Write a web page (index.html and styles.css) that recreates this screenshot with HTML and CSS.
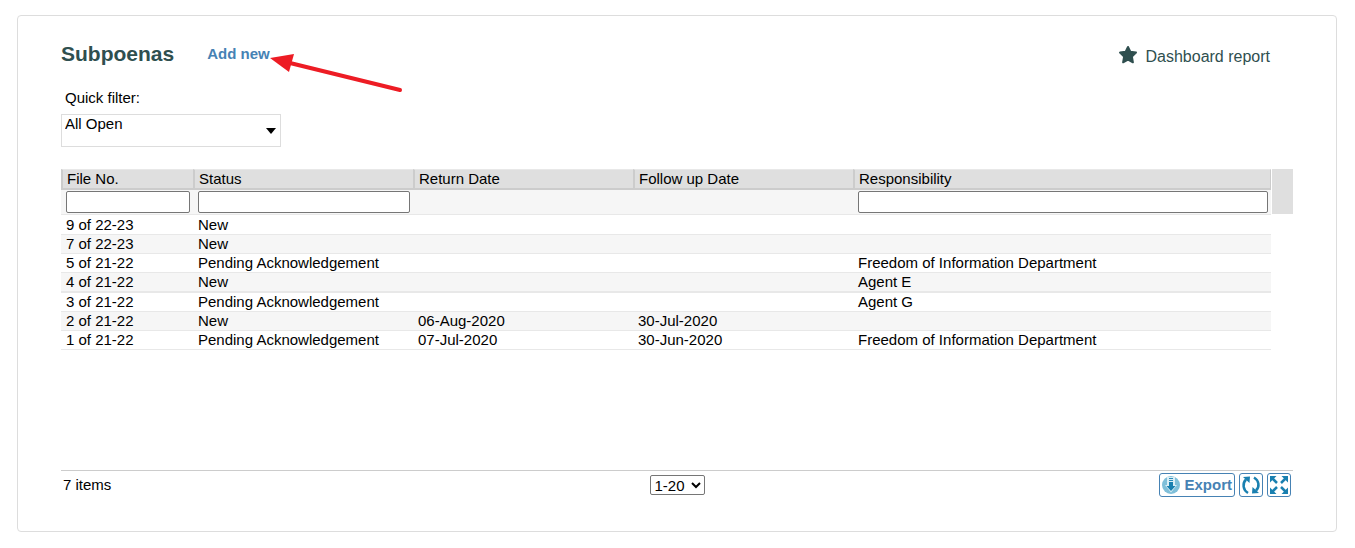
FILE: index.html
```html
<!DOCTYPE html>
<html lang="en">
<head>
    <meta charset="UTF-8">
    <meta name="viewport" content="width=device-width, initial-scale=1.0">
    <title>Subpoenas</title>
    <link rel="stylesheet" href="styles.css">
</head>
<body>
    <main class="card">
        <header class="card-header">
            <h1>Subpoenas</h1>
            <div class="add-new">
                <a href="#">Add new</a>
                <svg class="pointer" width="134" height="42" viewBox="0 0 134 42" aria-hidden="true">
                    <path d="M20 11 L130 38" stroke="#ed1c24" stroke-width="4" stroke-linecap="round"/>
                    <path d="M0 6 L24 2 L19 20 Z" fill="#ed1c24"/>
                </svg>
            </div>
            <a class="report" href="#">
                <svg width="20" height="20" viewBox="0 0 20 20" aria-hidden="true">
                    <path d="M10 2 L12.300 6.800 L18 7.600 L13.900 11.600 L14.900 17.300 L10 14.700 L5.100 17.300 L6.100 11.600 L2 7.600 L7.700 6.800 Z" fill="#2f4f4f" stroke="#2f4f4f" stroke-width="2" stroke-linejoin="round"/>
                </svg>
                Dashboard report
            </a>
        </header>

        <div class="quick-filter">
            <label for="quick-filter">Quick filter:</label>
            <div class="combo">
                <select id="quick-filter">
                    <option>All Open</option>
                    <option>All Closed</option>
                </select>
            </div>
        </div>

        <div class="grid">
            <table>
                <colgroup>
                    <col class="col-file">
                    <col class="col-mid">
                    <col class="col-mid">
                    <col class="col-mid">
                    <col>
                </colgroup>
                <thead>
                    <tr class="titles">
                        <th>File No.</th>
                        <th>Status</th>
                        <th>Return Date</th>
                        <th>Follow up Date</th>
                        <th>Responsibility</th>
                    </tr>
                    <tr class="filters">
                        <td><input type="text" aria-label="Filter by file no."></td>
                        <td><input type="text" aria-label="Filter by status"></td>
                        <td></td>
                        <td></td>
                        <td><input type="text" aria-label="Filter by responsibility"></td>
                    </tr>
                </thead>
                <tbody>
                    <tr><td>9 of 22-23</td><td>New</td><td></td><td></td><td></td></tr>
                    <tr><td>7 of 22-23</td><td>New</td><td></td><td></td><td></td></tr>
                    <tr><td>5 of 21-22</td><td>Pending Acknowledgement</td><td></td><td></td><td>Freedom of Information Department</td></tr>
                    <tr class="divider"><td>4 of 21-22</td><td>New</td><td></td><td></td><td>Agent E</td></tr>
                    <tr><td>3 of 21-22</td><td>Pending Acknowledgement</td><td></td><td></td><td>Agent G</td></tr>
                    <tr><td>2 of 21-22</td><td>New</td><td>06-Aug-2020</td><td>30-Jul-2020</td><td></td></tr>
                    <tr><td>1 of 21-22</td><td>Pending Acknowledgement</td><td>07-Jul-2020</td><td>30-Jun-2020</td><td>Freedom of Information Department</td></tr>
                </tbody>
            </table>
            <div class="gutter"></div>
        </div>

        <footer class="card-footer">
            <span class="count">7 items</span>
            <select class="pager" aria-label="Items shown">
                <option>1-20</option>
            </select>
            <div class="actions">
                <button type="button" class="export">
                    <svg width="20" height="20" viewBox="0 0 20 20" aria-hidden="true">
                        <circle cx="10" cy="10" r="9" fill="#7fbfd9"/>
                        <path d="M6 2h8v8h2l-6 7.500-6-7.500h2z" fill="#d9edf5"/>
                        <path d="M8 3.500h4M8 5.500h4" stroke="#2b8cb8"/>
                        <path d="M8 7h4v4h2.500l-4.500 5-4.500-5h2.500z" fill="#1a80b0"/>
                    </svg>
                    Export
                </button>
                <button type="button" aria-label="Refresh">
                    <svg width="20" height="20" viewBox="0 0 20 20" aria-hidden="true">
                        <path d="M7 18C2 15 1 8.500 5 4.500M13 2.500C18 5.500 19 11.500 15 15.500" fill="none" stroke="#1a80b0" stroke-width="2.500"/>
                        <path d="M2 2L9 1.500 8.500 8Z M18 18L11 18.500 11.500 12Z" fill="#1a80b0"/>
                    </svg>
                </button>
                <button type="button" aria-label="Full screen">
                    <svg width="20" height="20" viewBox="0 0 20 20" aria-hidden="true">
                        <path d="M1 1h6.500l-6.500 6.500zM19 1v6.500l-6.500-6.500zM1 19v-6.500l6.500 6.500zM19 19h-6.500l6.500-6.500z" fill="#1a80b0"/>
                        <path d="M3 3l5 5M17 3l-5 5M3 17l5-5M17 17l-5-5" stroke="#1a80b0" stroke-width="2.500"/>
                    </svg>
                </button>
            </div>
        </footer>
    </main>
</body>
</html>
```
FILE: styles.css
```css
* {
    box-sizing: border-box;
}
body {
    margin: 0;
    padding: 15px 18px 16px 17px;
    min-height: 100vh;
    display: flex;
    font-family: Arial, "Liberation Sans", sans-serif;
    font-size: 15px;
    color: #000;
    background: #fff;
}
a {
    text-decoration: none;
}
.card {
    flex: 1;
    display: flex;
    flex-direction: column;
    padding: 24px 43px 34px;
    border: 1px solid #ddd;
    border-radius: 4px;
}
.card-header {
    display: flex;
    align-items: flex-start;
    height: 30px;
}
.card-header h1 {
    margin: 0 33px 0 0;
    font-size: 21px;
    line-height: 28px;
    color: #2f4f4f;
}
.add-new {
    position: relative;
    line-height: 28px;
    font-weight: bold;
}
.add-new a {
    color: #4682b4;
}
.pointer {
    position: absolute;
    top: 12px;
    left: 100%;
}
.report {
    display: flex;
    gap: 7px;
    margin-left: auto;
    padding-right: 23px;
    font-size: 16px;
    line-height: 34px;
    color: #2f4f4f;
}
.report svg {
    margin-top: 5px;
}
.quick-filter {
    width: 220px;
    margin-top: 18px;
}
.quick-filter label {
    display: block;
    padding-left: 4px;
    line-height: 20px;
}
.combo {
    position: relative;
    margin-top: 6px;
}
.combo select {
    display: block;
    width: 100%;
    height: 33px;
    padding: 0 24px 14px 3px;
    border: 1px solid #ddd;
    border-radius: 0;
    appearance: none;
    background: #fff;
    font: inherit;
    color: inherit;
}
.combo::after {
    content: "";
    position: absolute;
    top: 14px;
    right: 5px;
    border: 5px solid transparent;
    border-top: 6px solid #000;
    border-bottom: 0;
    pointer-events: none;
}
.grid {
    flex: 1;
    display: flex;
    align-items: flex-start;
    margin-top: 22px;
}
.gutter {
    width: 21px;
    height: 45px;
    margin-left: 1px;
    background: #dfdfdf;
}
table {
    flex: 1;
    table-layout: fixed;
    border-collapse: separate;
    border-spacing: 0;
}
.col-file {
    width: 132px;
}
.col-mid {
    width: 220px;
}
th, td {
    padding: 0 5px;
    text-align: left;
    white-space: nowrap;
}
.titles th {
    height: 21px;
    line-height: 18px;
    border-top: 1px solid #e8e8e8;
    border-bottom: 2px solid #ccc;
    border-left: 2px solid #ccc;
    background: #dfdfdf;
    font-weight: normal;
    padding: 0 4px;
}
.titles th:last-child {
    border-right: 1px solid #ccc;
}
.filters td {
    height: 25px;
    padding: 0 3px 0 5px;
    border-bottom: 1px solid #e8e8e8;
    background: #f6f6f6;
}
.filters input {
    display: block;
    width: 100%;
    height: 22px;
    border: 1px solid #767676;
    border-radius: 2px;
    font: inherit;
}
tbody td {
    height: 19px;
    line-height: 18px;
    border-bottom: 1px solid #e8e8e8;
}
tbody tr:first-child td {
    height: 20px;
    padding-top: 1px;
}
tbody tr:nth-child(even) td {
    background: #f6f6f6;
}
tbody tr.divider td {
    height: 20px;
    border-bottom-width: 2px;
}
.card-footer {
    display: grid;
    grid-template-columns: 1fr auto 1fr;
    align-items: center;
    padding: 2px 2px 0;
    border-top: 1px solid #ccc;
}
.count {
    line-height: 24px;
}
.pager {
    width: 55px;
    height: 20px;
    border: 1px solid #767676;
    border-radius: 2px;
    background: #fff;
    font: inherit;
}
.actions {
    display: flex;
    justify-content: flex-end;
    gap: 4px;
}
.actions button {
    display: flex;
    align-items: center;
    gap: 3px;
    height: 24px;
    padding: 0 1px;
    border: 1px solid #4682b4;
    border-radius: 3px;
    background: #fff;
    font: inherit;
    font-weight: bold;
    line-height: 20px;
    color: #4682b4;
}
.actions .export {
    padding-right: 2px;
}
```
